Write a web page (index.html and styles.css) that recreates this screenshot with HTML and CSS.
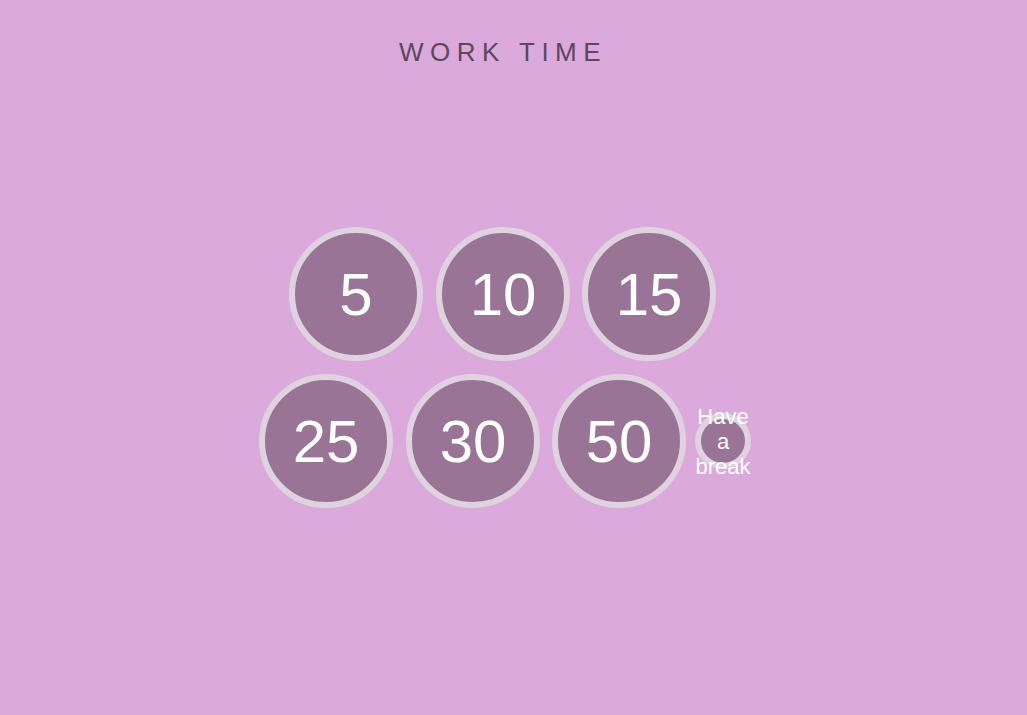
FILE: index.html
```html
<!DOCTYPE html>
<html>
<head>
<meta charset="utf-8">
<link rel="stylesheet" href="styles.css">
</head>
<body>
<h1 class="title">WORK TIME</h1>
<div class="timers">
  <div class="row row-top">
    <div class="circle">5</div>
    <div class="circle">10</div>
    <div class="circle">15</div>
  </div>
  <div class="row row-bottom">
    <div class="circle">25</div>
    <div class="circle">30</div>
    <div class="circle">50</div>
    <div class="circle small">Have a break</div>
  </div>
</div>
</body>
</html>
```
FILE: styles.css
```css
html, body {
  margin: 0;
  padding: 0;
  background: #dca9dc;
  height: 100%;
}
body {
  font-family: "Liberation Sans", Arial, sans-serif;
  width: 1005px;
}
.title {
  margin: 0;
  padding-top: 37px;
  text-align: center;
  font-weight: normal;
  font-size: 26px;
  line-height: 30px;
  letter-spacing: 6.5px;
  padding-left: 1px;
  color: #5b4859;
}
.timers {
  margin-top: 160px;
  display: flex;
  flex-direction: column;
  gap: 13px;
}
.row {
  display: flex;
  justify-content: center;
  align-items: center;
}
.row-top {
  gap: 13px;
}
.row-bottom {
  gap: 13px;
  padding-left: 5px;
}
.circle {
  box-sizing: border-box;
  width: 134px;
  height: 134px;
  border-radius: 50%;
  border: 6px solid #dfd3df;
  background: #997497;
  color: #ffffff;
  font-size: 60px;
  display: flex;
  align-items: center;
  justify-content: center;
}
.row-top .circle:nth-child(2) { margin-right: -1px; }
.row-bottom .circle:nth-child(2) { margin-right: -1px; }
.circle.small {
  width: 56px;
  height: 56px;
  font-size: 22px;
  line-height: 25px;
  text-align: center;
  margin-left: -4px;
}
```
